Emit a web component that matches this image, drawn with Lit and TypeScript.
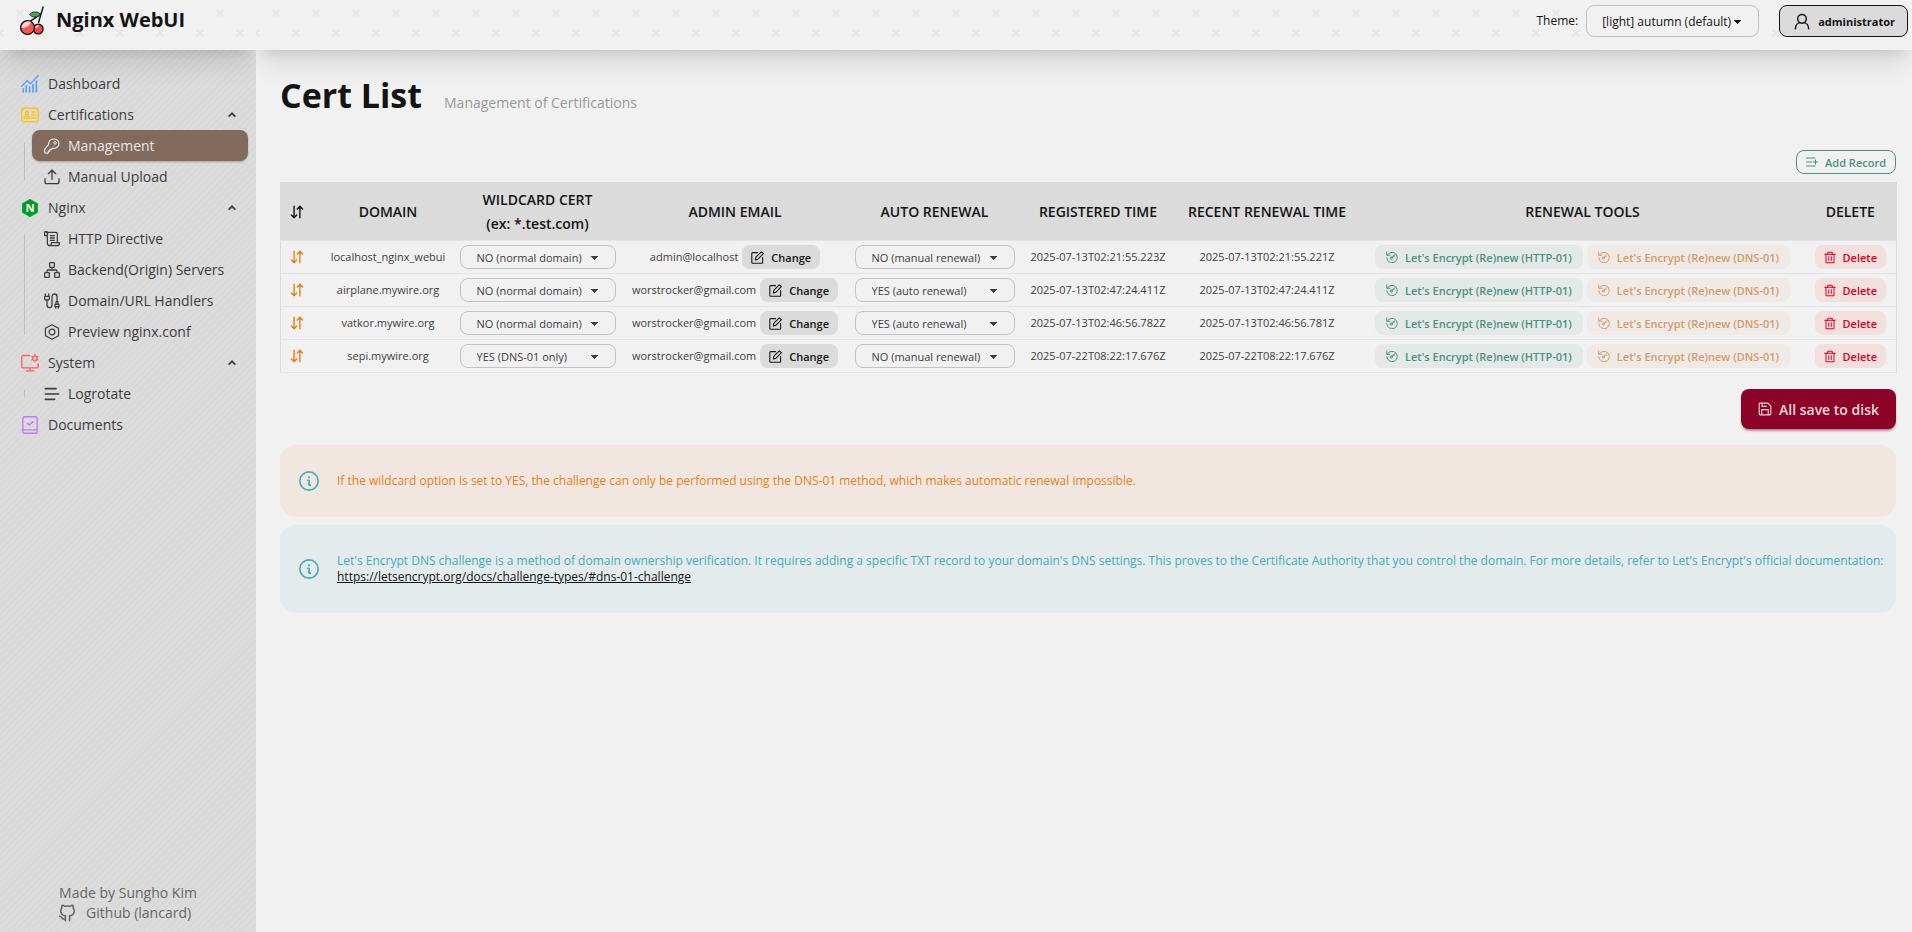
import { LitElement, html, css, svg, SVGTemplateResult, TemplateResult } from "lit";
import { customElement, property } from "lit/decorators.js";

const ICONS: Record<string, SVGTemplateResult> = {
  chart: svg`<g fill="none" stroke="currentColor" stroke-width="1.800" stroke-linecap="round" stroke-linejoin="round">
    <path d="M1 15 8 7.500l4.500 4L23 1"/><path d="M3 18.500V22.500M7 14.500V22.500M11.500 16V22.500M16 13V22.500M20.500 8V22.500" stroke-width="2.200"/></g>`,
  idcard: svg`<g fill="none" stroke="currentColor" stroke-width="1.800" stroke-linejoin="round" stroke-linecap="round">
    <rect x="1" y="3" width="22" height="18" rx="3"/><circle cx="8" cy="9.500" r="2.200"/>
    <path d="M4.500 16.500c0-2.200 1.500-3.200 3.500-3.200s3.500 1 3.500 3.200zM14.500 8h5M14.500 12h5M14.500 16h5"/></g>`,
  key: svg`<path fill="none" stroke="currentColor" stroke-width="1.800" stroke-linejoin="round" d="M14 1.500c-4.500 0-7.500 3.600-7 8L1.500 16.500c-.4.400-.5.900-.5 1.400V21c0 1 .6 1.800 1.600 1.800h2.900c.7 0 1-.5 1-1.200v-1.800h2.300v-2.600h2.500l1.700-2c5 1.200 9.500-2 9.500-7 0-3.700-3.500-6.700-8.500-6.700z"/><circle cx="16.500" cy="7.300" r="1.900" fill="none" stroke="currentColor" stroke-width="1.500"/>`,
  upload: svg`<g fill="none" stroke="currentColor" stroke-width="2" stroke-linecap="round" stroke-linejoin="round">
    <path d="M1.500 14.500V19a3 3 0 0 0 3 3h15a3 3 0 0 0 3-3v-4.500M12 15.500V2M6.500 7 12 1.500 17.500 7"/></g>`,
  nginx: svg`<path fill="#009a22" d="M12 0 22.500 6v12L12 24 1.500 18V6z"/><path fill="none" stroke="#00b13c" stroke-width="1.200" d="M12 .7 21.900 6.400v11.200L12 23.300 2.100 17.600V6.400z"/>
    <text x="12" y="17.500" text-anchor="middle" font-family="Open Sans, sans-serif" font-weight="700" font-size="15" fill="#fff">N</text>`,
  scroll: svg`<g fill="none" stroke="currentColor" stroke-width="1.900" stroke-linejoin="round" stroke-linecap="round">
    <path d="M5 7V4.500a2.500 2.500 0 1 0-4 0V7h4v11.500A3.500 3.500 0 0 0 8.500 22H20a3 3 0 0 0 3-3v-1.500H11V19a3 3 0 0 1-3 3M3 2h14.500A2.500 2.500 0 0 1 20 4.500v13M9.500 7h6M9.500 10.500h6M9.500 14h6"/></g>`,
  servers: svg`<g fill="none" stroke="currentColor" stroke-width="1.900" stroke-linejoin="round">
    <rect x="8.500" y="1" width="7" height="7" rx="1"/><rect x="1" y="16" width="7" height="7" rx="1"/><rect x="16" y="16" width="7" height="7" rx="1"/><path d="M12 8v4M4.500 16v-2.500c0-1 .5-1.500 1.500-1.500h12c1 0 1.500.5 1.500 1.500V16"/></g>`,
  plug: svg`<g fill="none" stroke="currentColor" stroke-width="1.900" stroke-linejoin="round" stroke-linecap="round">
    <path d="M2 1.500V5M7 1.500V5M1 5h7v3.500a2 2 0 0 1-2 2H3a2 2 0 0 1-2-2zM4.500 10.500V18a4 4 0 0 0 4 4 3.500 3.500 0 0 0 3.500-3.500V5.500a4 4 0 0 1 4-4 3.500 3.500 0 0 1 3.500 3.500V13M18 13h3v4h-3zM16.500 17h6v3.500h-6zM17.500 20.500v2M21.500 20.500v2"/></g>`,
  hexnut: svg`<g fill="none" stroke="currentColor" stroke-width="1.800" stroke-linejoin="round"><path d="M12 1 21.800 6.500v11L12 23 2.200 17.500v-11z"/><circle cx="12" cy="12" r="4.300"/></g>`,
  monitor: svg`<g fill="none" stroke="currentColor" stroke-width="1.900" stroke-linecap="round" stroke-linejoin="round">
    <path d="M11.500 2H3a2 2 0 0 0-2 2v12.500a2 2 0 0 0 2 2h18a2 2 0 0 0 2-2V13M12 18.500V22M7 22.500h10"/>
    <circle cx="18.500" cy="5.500" r="3"/><path stroke-width="1.500" d="M18.500.5v2M18.500 8.500v2M14.200 3l1.700 1M21 7l1.700 1M14.200 8l1.700-1M21 4l1.700-1"/></g>`,
  lines: svg`<path fill="none" stroke="currentColor" stroke-width="2.400" stroke-linecap="round" d="M2 4h16M2 12h20M2 20h14"/>`,
  book: svg`<g fill="none" stroke="currentColor" stroke-width="1.800" stroke-linecap="round" stroke-linejoin="round">
    <rect x="2.500" y="1" width="19" height="22" rx="2"/><path d="M2.500 18.500h19M8.500 9.500l2.500 2.500 5-4.500"/></g>`,
  chevron: svg`<path fill="none" stroke="currentColor" stroke-width="5.500" d="M2 17 12 7l10 10"/>`,
  github: svg`<path fill="none" stroke="currentColor" stroke-width="2.200" stroke-linecap="round" stroke-linejoin="round" d="M9 23v-7c-3.500-.6-6.500-2.400-6.500-7 0-1.700.5-3 1.500-4.200-.3-1.400-.2-2.800.3-3.800 1.500 0 3 .8 4.200 1.600 2.300-.6 4.700-.6 7 0C16.700 1.800 18.200 1 19.700 1c.5 1 .6 2.400.3 3.800 1 1.200 1.500 2.500 1.500 4.200 0 4.600-3 6.400-6.500 7v7M9 20.500c-3 .8-4.500-.5-5.200-2C3.300 17.500 2.500 16.500 1 16.500"/>`,
  user: svg`<g fill="none" stroke="currentColor" stroke-width="2.200" stroke-linecap="round"><circle cx="12" cy="8" r="6.500"/><path d="M2 23c.3-5 3.500-9 7-9.300M22 23c-.3-5-3.500-9-7-9.300"/></g>`,
  addlist: svg`<path fill="none" stroke="currentColor" stroke-width="2.200" stroke-linecap="round" d="M1 4h17M1 12h11M1 20h17M15 12h8M19 8v8"/>`,
  sort: svg`<path fill="none" stroke="currentColor" stroke-width="2.400" stroke-linecap="round" stroke-linejoin="round" d="M7 2v20M2.500 17 7 22l4.500-5M17 22V2M12.500 7 17 2l4.500 5"/>`,
  edit: svg`<path fill="none" stroke="currentColor" stroke-width="2" stroke-linecap="round" stroke-linejoin="round" d="M12 3H3a1.500 1.500 0 0 0-1.500 1.500V21A1.500 1.500 0 0 0 3 22.500h17a1.500 1.500 0 0 0 1.500-1.500v-9M8 16.500l1-5L19 1.500l4 3.500-10.500 10.500z"/>`,
  renew: svg`<g fill="none" stroke="currentColor" stroke-width="2" stroke-linecap="round" stroke-linejoin="round"><path d="M2.500 8.500a10.500 10.500 0 1 1-1 5M1.500 2v6.500H8"/><circle cx="10.500" cy="14" r="2.200"/><path d="M12 12.500 17.500 7.500M15 10l1.500 1.500"/></g>`,
  trash: svg`<path fill="none" stroke="currentColor" stroke-width="2" stroke-linecap="round" stroke-linejoin="round" d="M1.500 5.500h21M7.500 5.500v-4h9v4M4 5.500V22.500h16V5.500M9.500 10.500v7.500M14.500 10.500v7.500"/>`,
  save: svg`<path fill="none" stroke="currentColor" stroke-width="1.900" stroke-linejoin="round" d="M2 3.500A1.500 1.500 0 0 1 3.500 2H17l5 5v13.500a1.500 1.500 0 0 1-1.500 1.500h-17A1.500 1.500 0 0 1 2 20.500zM6.500 22v-9h11v9M7 2v5.500h8"/>`,
  info: svg`<g fill="none" stroke="currentColor" stroke-width="2" stroke-linecap="round" stroke-linejoin="round"><circle cx="12" cy="12" r="11"/><path d="M10.500 11.200H12V17h1.500"/></g><circle cx="12" cy="7.500" r="1.300" fill="currentColor"/>`,
};

const icon = (name: string, cls = ""): TemplateResult =>
  html`<svg class="icon ${cls}" viewBox="0 0 24 24" aria-hidden="true">${ICONS[name]}</svg>`;

const sharedStyles = css`
  :host {
    font-family: "Open Sans", "Noto Sans CJK KR", sans-serif;
  }
  *,
  *::before {
    box-sizing: border-box;
  }
  .icon {
    display: block;
    flex: none;
    width: 12px;
    height: 12px;
  }
  .pattern {
    height: 50px;
    background-color: #f1f1f1;
    background-image: url("data:image/svg+xml,%3Csvg xmlns='http://www.w3.org/2000/svg' width='40' height='40'%3E%3Cpath d='M16.500 9.500l7 7m0-7l-7 7M0 33l3.500 3.500M0 33l3.500-3.500M40 33l-3.500 3.500M40 33l-3.500-3.500' stroke='%23e8e8ea' stroke-width='2.400' fill='none'/%3E%3C/svg%3E");
    box-shadow: 0 20px 25px -5px rgb(0 0 0 / 0.1), 0 8px 10px -6px rgb(0 0 0 / 0.1);
    position: relative;
    z-index: 1;
  }
`;

interface Entry {
  label: string;
  icon: string;
  tone?: string;
  active?: boolean;
  children?: Entry[];
}

const MENU: Entry[] = [
  { label: "Dashboard", icon: "chart", tone: "blue" },
  {
    label: "Certifications", icon: "idcard", tone: "yellow",
    children: [
      { label: "Management", icon: "key", active: true },
      { label: "Manual Upload", icon: "upload" },
    ],
  },
  {
    label: "Nginx", icon: "nginx",
    children: [
      { label: "HTTP Directive", icon: "scroll" },
      { label: "Backend(Origin) Servers", icon: "servers" },
      { label: "Domain/URL Handlers", icon: "plug" },
      { label: "Preview nginx.conf", icon: "hexnut" },
    ],
  },
  { label: "System", icon: "monitor", tone: "red", children: [{ label: "Logrotate", icon: "lines" }] },
  { label: "Documents", icon: "book", tone: "purple" },
];

@customElement("side-bar")
class SideBar extends LitElement {
  static styles = [
    sharedStyles,
    css`
      :host {
        display: flex;
        flex-direction: column;
        overflow: clip;
        color: #3d3d3d;
        font-size: 14px;
        line-height: 20px;
        background: repeating-linear-gradient(135deg, #dcdcdc 0 3px, #d8d8d8 3px 5px);
      }
      .brand {
        display: flex;
        align-items: flex-start;
        gap: 12px;
        padding: 6px 20px;
        color: #141414;
        font-size: 20px;
        font-weight: 700;
        line-height: 28px;
      }
      .logo {
        width: 24px;
        height: 29px;
      }
      nav {
        flex: 1;
        padding: 18px 8px;
      }
      ul {
        list-style: none;
        margin: 0;
        padding: 0;
      }
      details > ul {
        position: relative;
        margin-left: 16px;
        padding-left: 8px;
      }
      details > ul::before {
        content: "";
        position: absolute;
        left: 0;
        top: 12px;
        bottom: 12px;
        width: 1px;
        background: #bdbdbd;
      }
      .item {
        display: flex;
        align-items: center;
        gap: 8px;
        height: 31px;
        padding: 0 12px;
        border-radius: 8px;
        color: inherit;
        text-decoration: none;
        cursor: pointer;
      }
      .item .icon {
        width: 16px;
        height: 16px;
      }
      .top {
        gap: 9px;
        padding-left: 13px;
      }
      .top .glyph {
        width: 18px;
        height: 18px;
      }
      .item .chevron {
        width: 8px;
        height: 8px;
        margin-left: auto;
      }
      .active {
        background: #826a5c;
        color: #ece6e3;
        box-shadow: 0 1px 2px rgb(0 0 0 / 0.25);
      }
      .blue { color: #57a3f8; }
      .yellow { color: #fbc618; }
      .red { color: #fb6467; }
      .purple { color: #bf7bf7; }
      footer {
        display: grid;
        justify-content: center;
        padding: 0 0 9px;
        color: #666;
      }
      footer a {
        display: flex;
        align-items: center;
        gap: 10px;
        color: inherit;
        text-decoration: none;
      }
      footer .icon {
        width: 17px;
        height: 18px;
      }
    `,
  ];

  private link(e: Entry, top: boolean): TemplateResult {
    return html`<li>
      <a href="#" class="item ${top ? "top" : ""} ${e.active ? "active" : ""}">
        ${icon(e.icon, `glyph ${e.tone ?? ""}`)}${e.label}
      </a>
    </li>`;
  }

  render() {
    return html`
      <div class="brand pattern">
        <svg class="logo" viewBox="0 0 24 29" aria-hidden="true">
          <path d="M23.300.5C22 5 20.500 9 18.500 17M20.500 7.500C17 12 12 13 8.500 17" fill="none" stroke="#111" stroke-width="1.400" />
          <path d="M9.500 8.500C12 5.500 17 5 20.500 8c-3 4-8 4-11 .5z" fill="#4fa150" stroke="#163d18" stroke-width="1" />
          <circle cx="18.200" cy="23" r="4.900" fill="#f04848" stroke="#111" stroke-width="1.300" />
          <circle cx="7.500" cy="21.500" r="6.900" fill="#fb5557" stroke="#111" stroke-width="1.300" />
          <path d="M1.800 22c0-4.500 3.500-7 8.500-6.500 1.500 2.500-4 7-8.500 6.500z" fill="#fcd9d9" />
          <path d="M15 22c.5-2 2-3 4-2.500 0 1.500-2 3-4 2.500z" fill="#fcc" />
        </svg>
        <span>Nginx WebUI</span>
      </div>
      <nav>
        <ul>
          ${MENU.map((e) =>
            e.children
              ? html`<li>
                  <details open>
                    <summary class="item top">
                      ${icon(e.icon, `glyph ${e.tone ?? ""}`)}${e.label}${icon("chevron", "chevron")}
                    </summary>
                    <ul>${e.children.map((c) => this.link(c, false))}</ul>
                  </details>
                </li>`
              : this.link(e, true)
          )}
        </ul>
      </nav>
      <footer>
        <span>Made by Sungho Kim</span>
        <a href="#">${icon("github")}Github (lancard)</a>
      </footer>
    `;
  }
}

interface Cert {
  domain: string;
  wildcard: string;
  email: string;
  auto: string;
  registered: string;
  renewed: string;
}

const WILDCARD = ["NO (normal domain)", "YES (DNS-01 only)"];
const AUTO = ["NO (manual renewal)", "YES (auto renewal)"];

const CERTS: Cert[] = [
  { domain: "localhost_nginx_webui", wildcard: WILDCARD[0], email: "admin@localhost", auto: AUTO[0], registered: "2025-07-13T02:21:55.223Z", renewed: "2025-07-13T02:21:55.221Z" },
  { domain: "airplane.mywire.org", wildcard: WILDCARD[0], email: "worstrocker@gmail.com", auto: AUTO[1], registered: "2025-07-13T02:47:24.411Z", renewed: "2025-07-13T02:47:24.411Z" },
  { domain: "vatkor.mywire.org", wildcard: WILDCARD[0], email: "worstrocker@gmail.com", auto: AUTO[1], registered: "2025-07-13T02:46:56.782Z", renewed: "2025-07-13T02:46:56.781Z" },
  { domain: "sepi.mywire.org", wildcard: WILDCARD[1], email: "worstrocker@gmail.com", auto: AUTO[0], registered: "2025-07-22T08:22:17.676Z", renewed: "2025-07-22T08:22:17.676Z" },
];

const controlStyles = css`
  button,
  select {
    font-family: inherit;
    font-size: 11px;
    white-space: nowrap;
    cursor: pointer;
  }
  button {
    display: inline-flex;
    align-items: center;
    gap: 7px;
    height: 24px;
    padding: 0 9px;
    border: 0;
    border-radius: 8px;
    font-weight: 600;
  }
  select {
    appearance: none;
    height: 24px;
    padding: 0 28px 0 16px;
    border: 1px solid #c3c3c3;
    border-radius: 8px;
    color: inherit;
    background-color: #f1f1f1;
    background-image: linear-gradient(45deg, transparent 50%, currentColor 50%),
      linear-gradient(135deg, currentColor 50%, transparent 50%);
    background-position: calc(100% - 20px) calc(50% + 1px), calc(100% - 16px) calc(50% + 1px);
    background-size: 4px 4px;
    background-repeat: no-repeat;
  }
`;

@customElement("cert-table")
class CertTable extends LitElement {
  @property({ attribute: false }) rows: Cert[] = [];

  static styles = [
    sharedStyles,
    controlStyles,
    css`
      :host {
        display: block;
      }
      table {
        width: 100%;
        table-layout: fixed;
        border-collapse: collapse;
        border: 1px solid #dadada;
        color: #404040;
        font-size: 11px;
        line-height: 16px;
        text-align: center;
      }
      .c-sort { width: 44px; }
      .c-domain { width: 127px; }
      .c-wild { width: 172px; }
      .c-mail { width: 223px; }
      .c-auto { width: 176px; }
      .c-reg { width: 151px; }
      .c-recent { width: 187px; }
      .c-tools { width: 444px; }
      .c-del { width: 92px; }
      tr {
        border-bottom: 1px solid #e4e4e4;
      }
      thead {
        background: #dbdbdb;
        color: #141414;
        font-size: 14px;
        line-height: 24px;
      }
      th {
        padding: 5px 0 4px;
        font-weight: 600;
        white-space: nowrap;
      }
      td {
        padding: 4px 8px;
        white-space: nowrap;
      }
      .c-domain-cell {
        padding: 4px 0;
      }
      th:first-child {
        padding-left: 8px;
      }
      .sort {
        width: 16px;
        height: 14px;
      }
      td .sort {
        color: #e97f14;
      }
      td select {
        display: block;
        width: 100%;
      }
      .group {
        display: flex;
        justify-content: center;
        align-items: center;
        gap: 4px;
      }
      .change {
        background: #dbdbdb;
        color: #141414;
      }
      .change .icon {
        width: 13px;
        height: 13px;
      }
      .http,
      .dns {
        padding: 0 11px;
      }
      .http {
        background: #e4e9e8;
        color: #499380;
      }
      .dns {
        background: #efeae6;
        color: #d59b6a;
      }
      .delete {
        background: #f2e0df;
        color: #d8001e;
      }
      .delete .icon {
        height: 13px;
      }
    `,
  ];

  private choice(label: string, options: string[], value: string) {
    return html`<select aria-label=${label}>
      ${options.map((o) => html`<option ?selected=${o === value}>${o}</option>`)}
    </select>`;
  }

  render() {
    return html`<table>
      <colgroup>
        <col class="c-sort" /><col class="c-domain" /><col class="c-wild" /><col class="c-mail" /><col class="c-auto" />
        <col class="c-reg" /><col class="c-recent" /><col class="c-tools" /><col class="c-del" />
      </colgroup>
      <thead>
        <tr>
          <th scope="col" aria-label="Order">${icon("sort", "sort")}</th>
          <th scope="col">DOMAIN</th>
          <th scope="col">WILDCARD CERT<br />(ex: *.test.com)</th>
          <th scope="col">ADMIN EMAIL</th>
          <th scope="col">AUTO RENEWAL</th>
          <th scope="col">REGISTERED TIME</th>
          <th scope="col">RECENT RENEWAL TIME</th>
          <th scope="col">RENEWAL TOOLS</th>
          <th scope="col">DELETE</th>
        </tr>
      </thead>
      <tbody>
        ${this.rows.map(
          (r) => html`<tr>
            <td>${icon("sort", "sort")}</td>
            <td class="c-domain-cell">${r.domain}</td>
            <td>${this.choice("Wildcard cert", WILDCARD, r.wildcard)}</td>
            <td><div class="group">${r.email}<button class="change">${icon("edit")}Change</button></div></td>
            <td>${this.choice("Auto renewal", AUTO, r.auto)}</td>
            <td>${r.registered}</td>
            <td>${r.renewed}</td>
            <td>
              <div class="group">
                <button class="http">${icon("renew")}Let's Encrypt (Re)new (HTTP-01)</button>
                <button class="dns">${icon("renew")}Let's Encrypt (Re)new (DNS-01)</button>
              </div>
            </td>
            <td><div class="group"><button class="delete">${icon("trash")}Delete</button></div></td>
          </tr>`
        )}
      </tbody>
    </table>`;
  }
}

@customElement("app-root")
class AppRoot extends LitElement {
  static styles = [
    sharedStyles,
    controlStyles,
    css`
      :host {
        display: grid;
        grid-template-columns: 256px minmax(0, 1fr);
        min-height: 100vh;
        background: #f1f1f1;
        color: #141414;
        font-size: 12px;
        line-height: 16px;
      }
      main {
        overflow: clip;
      }
      .topbar {
        display: flex;
        justify-content: flex-end;
        align-items: flex-start;
        padding: 5px 4px 0;
      }
      .topbar label {
        margin-right: 8px;
        line-height: 32px;
      }
      .topbar select {
        height: 32px;
        width: 173px;
        margin-right: 20px;
        padding: 0 24px 0 15px;
        font-size: 12px;
      }
      .admin {
        height: 32px;
        padding: 0 12px 0 14px;
        gap: 8px;
        border: 1px solid #141414;
        background: #dbdbdb;
        color: #141414;
        font-weight: 700;
      }
      .admin .icon {
        width: 16px;
        height: 17px;
      }
      .content {
        display: flex;
        flex-direction: column;
        padding: 23px 16px 24px 24px;
      }
      .heading {
        display: flex;
        align-items: baseline;
        gap: 22px;
      }
      h1 {
        margin: 0;
        font-size: 34px;
        line-height: 44px;
        font-weight: 700;
      }
      .heading p {
        margin: 0;
        color: #999;
        font-size: 14px;
      }
      .add {
        align-self: flex-end;
        margin: 33px 0 8px;
        border: 1px solid #499380;
        background: transparent;
        color: #499380;
      }
      .save {
        align-self: flex-end;
        height: 40px;
        margin: 16px 0;
        padding: 0 17px;
        background: #8c0327;
        color: #efd9dd;
        font-size: 14px;
        box-shadow: 0 3px 3px -2px rgb(140 3 39 / 0.5), 0 2px 2px rgb(0 0 0 / 0.15);
      }
      .save .icon {
        width: 14px;
        height: 14px;
      }
      .alert {
        display: flex;
        align-items: center;
        gap: 18px;
        padding: 28px 8px 28px 19px;
        border-radius: 16px;
      }
      .alert + .alert {
        margin-top: 8px;
      }
      .alert .icon {
        width: 20px;
        height: 20px;
        margin: -2px 0;
        color: #42adbb;
      }
      .warning {
        background: #f1e7e0;
        color: #e97f14;
      }
      .note {
        background: #e3ebec;
        color: #42adbb;
      }
      .note a {
        display: block;
        width: fit-content;
        color: #141414;
      }
    `,
  ];

  render() {
    return html`
      <side-bar></side-bar>
      <main>
        <header class="topbar pattern">
          <label for="theme">Theme:</label>
          <select id="theme"><option>[light] autumn (default)</option></select>
          <button class="admin">${icon("user")}administrator</button>
        </header>
        <section class="content">
          <div class="heading">
            <h1>Cert List</h1>
            <p>Management of Certifications</p>
          </div>
          <button class="add">${icon("addlist")}Add Record</button>
          <cert-table .rows=${CERTS}></cert-table>
          <button class="save">${icon("save")}All save to disk</button>
          <div class="alert warning" role="note">
            ${icon("info")}
            <div>If the wildcard option is set to YES, the challenge can only be performed using the DNS-01 method, which makes automatic renewal impossible.</div>
          </div>
          <div class="alert note" role="note">
            ${icon("info")}
            <div>
              Let's Encrypt DNS challenge is a method of domain ownership verification. It requires adding a specific TXT record to your domain's DNS settings. This proves to the Certificate Authority that you control the domain. For more details, refer to Let's Encrypt's official documentation:
              <a href="https://letsencrypt.org/docs/challenge-types/#dns-01-challenge">https://letsencrypt.org/docs/challenge-types/#dns-01-challenge</a>
            </div>
          </div>
        </section>
      </main>
    `;
  }
}
